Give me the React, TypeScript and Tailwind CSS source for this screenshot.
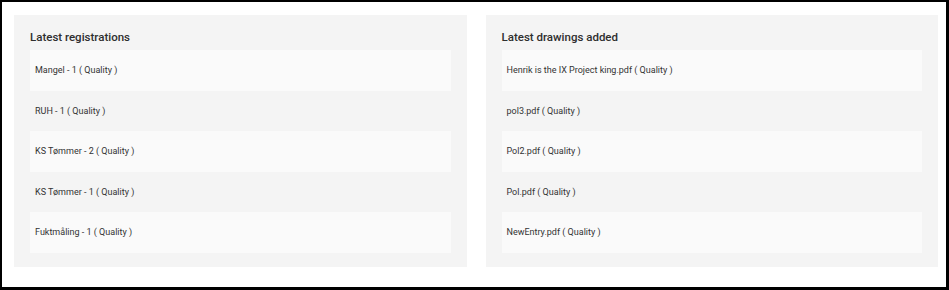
const REGISTRATIONS = [
  "Mangel - 1 ( Quality )",
  "RUH - 1 ( Quality )",
  "KS Tømmer - 2 ( Quality )",
  "KS Tømmer - 1 ( Quality )",
  "Fuktmåling - 1 ( Quality )",
];

const DRAWINGS = [
  "Henrik is the IX Project king.pdf ( Quality )",
  "pol3.pdf ( Quality )",
  "Pol2.pdf ( Quality )",
  "Pol.pdf ( Quality )",
  "NewEntry.pdf ( Quality )",
];

function Panel({ title, items }: { title: string; items: string[] }) {
  return (
    <div className="flex-1 bg-[#f4f4f4] px-4 pb-[14px]">
      <h3 className="pt-[13px] pb-[4px] text-[11.5px] leading-[18px] font-medium text-[#2e2e2e]">{title}</h3>
      <ul>
        {items.map((item, i) => (
          <li
            key={i}
            className={`flex h-[40.6px] items-center pt-[1px] pl-[5px] text-[9px] text-[#333] ${i % 2 === 0 ? "bg-[#fafafa]" : ""}`}
          >
            {item}
          </li>
        ))}
      </ul>
    </div>
  );
}

export default function App() {
  return (
    <div
      className="flex h-[290px] w-[949px] gap-[19px] border-t-2 border-l-2 border-r-[3px] border-b-[3px] border-black bg-white pt-[13px] pb-[20px] pl-3 pr-2"
      style={{ fontFamily: "Roboto, 'Liberation Sans', sans-serif" }}
    >
      <Panel title="Latest registrations" items={REGISTRATIONS} />
      <Panel title="Latest drawings added" items={DRAWINGS} />
    </div>
  );
}
